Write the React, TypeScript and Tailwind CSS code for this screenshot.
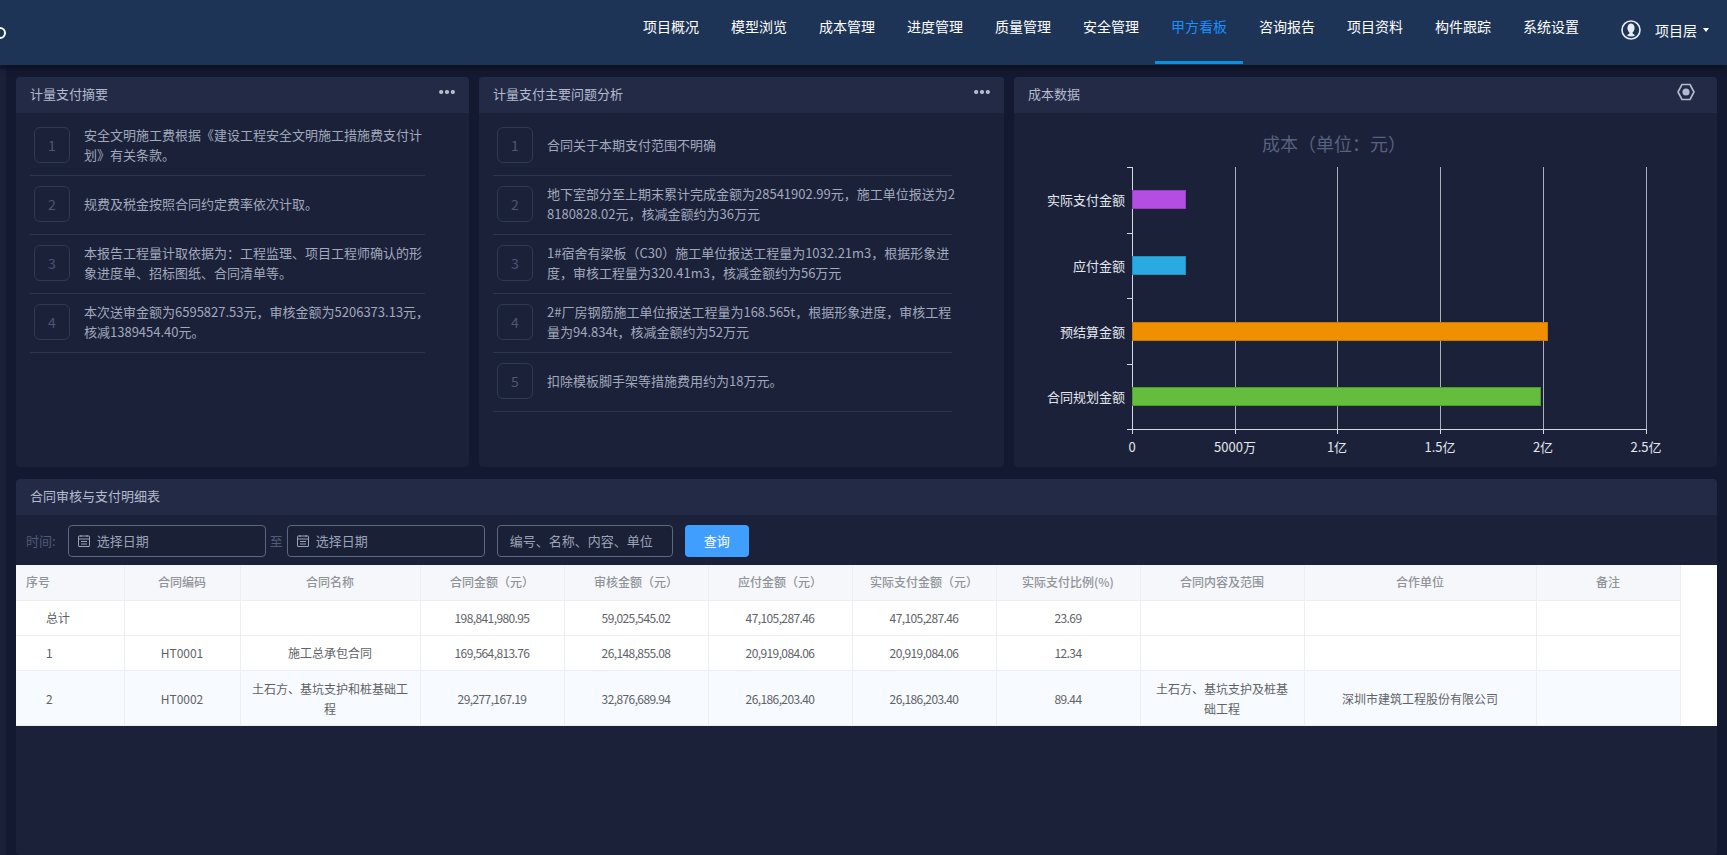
import { Ellipsis } from "lucide-react";
import type { ReactNode } from "react";

const navItems = ["项目概况", "模型浏览", "成本管理", "进度管理", "质量管理", "安全管理", "甲方看板", "咨询报告", "项目资料", "构件跟踪", "系统设置"];

const summary = [
  "安全文明施工费根据《建设工程安全文明施工措施费支付计划》有关条款。",
  "规费及税金按照合同约定费率依次计取。",
  "本报告工程量计取依据为：工程监理、项目工程师确认的形象进度单、招标图纸、合同清单等。",
  "本次送审金额为6595827.53元，审核金额为5206373.13元，核减1389454.40元。",
];

const issues = [
  "合同关于本期支付范围不明确",
  "地下室部分至上期末累计完成金额为28541902.99元，施工单位报送为28180828.02元，核减金额约为36万元",
  "1#宿舍有梁板（C30）施工单位报送工程量为1032.21m3，根据形象进度，审核工程量为320.41m3，核减金额约为56万元",
  "2#厂房钢筋施工单位报送工程量为168.565t，根据形象进度，审核工程量为94.834t，核减金额约为52万元",
  "扣除模板脚手架等措施费用约为18万元。",
];

const columns = [
  { label: "序号", width: "w-27" },
  { label: "合同编码", width: "w-29" },
  { label: "合同名称", width: "w-45" },
  { label: "合同金额（元）", width: "w-36" },
  { label: "审核金额（元）", width: "w-36" },
  { label: "应付金额（元）", width: "w-36" },
  { label: "实际支付金额（元）", width: "w-36" },
  { label: "实际支付比例(%)", width: "w-36" },
  { label: "合同内容及范围", width: "w-41" },
  { label: "合作单位", width: "w-58" },
  { label: "备注", width: "w-36" },
];

const rows = [
  ["总计", "", "", "198,841,980.95", "59,025,545.02", "47,105,287.46", "47,105,287.46", "23.69", "", "", ""],
  ["1", "HT0001", "施工总承包合同", "169,564,813.76", "26,148,855.08", "20,919,084.06", "20,919,084.06", "12.34", "", "", ""],
  ["2", "HT0002", "土石方、基坑支护和桩基础工程", "29,277,167.19", "32,876,689.94", "26,186,203.40", "26,186,203.40", "89.44", "土石方、基坑支护及桩基础工程", "深圳市建筑工程股份有限公司", ""],
];

const bars = [
  { label: "实际支付金额", y: 77, width: 53, fill: "#b44ee2", stroke: "#9a3fc4" },
  { label: "应付金额", y: 143, width: 53, fill: "#29abe2", stroke: "#2090c0" },
  { label: "预结算金额", y: 209, width: 415, fill: "#f09000", stroke: "#c97a05" },
  { label: "合同规划金额", y: 274, width: 408, fill: "#64bd3c", stroke: "#4f9a30" },
];

const xTicks = [
  { x: 118, label: "0" },
  { x: 221, label: "5000万" },
  { x: 323, label: "1亿" },
  { x: 426, label: "1.5亿" },
  { x: 529, label: "2亿" },
  { x: 632, label: "2.5亿" },
];

function Panel({ title, action, className, children }: { title: string; action?: ReactNode; className?: string; children: ReactNode }) {
  return (
    <section className={`flex flex-col overflow-hidden rounded bg-[#1b2139] ${className ?? ""}`}>
      <div className="flex h-9 shrink-0 items-center justify-between bg-[#232a46] pb-0.5 pl-3.5 pr-4 text-[13px] text-[#b4bbcd]">
        <span>{title}</span>
        {action}
      </div>
      {children}
    </section>
  );
}

function Dots() {
  return <Ellipsis size={20} strokeWidth={3} className="-mr-1 -mt-1 text-[#c4cad8]" />;
}

function IssueList({ items, rowWidth }: { items: string[]; rowWidth: string }) {
  return (
    <ul className={`ml-3.5 pt-1 text-[13px] leading-5 text-[#a1a9bc] ${rowWidth}`}>
      {items.map((text, i) => (
        <li key={i} className="border-b border-[#2c3550] pb-2.5 pl-1 pt-2">
          <div className="flex min-h-10 items-center gap-3.5">
            <span className="flex h-9 w-9 shrink-0 items-center justify-center rounded-md border border-[#2f3a57] text-sm text-[#4d5672]">
              {i + 1}
            </span>
            <p className="-mr-1.5 break-all">{text}</p>
          </div>
        </li>
      ))}
    </ul>
  );
}

function CalendarIcon() {
  return (
    <svg viewBox="0 0 14 14" className="h-3.5 w-3.5 shrink-0 text-[#9aa3b8]" fill="none" stroke="currentColor">
      <rect x="1.5" y="2" width="11" height="10.5" rx="0.5" />
      <path d="M1.5 5h11M4 1v2M10 1v2M4 7.5h6M4 10h6" />
    </svg>
  );
}

function DateInput() {
  return (
    <div className="flex h-8 w-[198px] items-center gap-1.5 rounded border border-[#5d6780] bg-[#1a2036] px-2 text-[13px] text-[#9aa3b8]">
      <CalendarIcon />
      <span>选择日期</span>
    </div>
  );
}

function CostChart() {
  return (
    <svg viewBox="0 0 703 354" className="h-full w-full" fontSize="13">
      <text x="320" y="38" textAnchor="middle" fontSize="18" fill="#56627f">成本（单位：元）</text>
      {xTicks.map(({ x, label }) => (
        <g key={label}>
          {x > 118 && <line x1={x + 0.5} x2={x + 0.5} y1="54" y2="317" stroke="#aab0bd" />}
          <line x1={x + 0.5} x2={x + 0.5} y1="316" y2="321" stroke="#d5d9e2" />
          <text x={x} y="339" textAnchor="middle" fill="#e4e7ee">{label}</text>
        </g>
      ))}
      <line x1="118.5" x2="118.5" y1="54" y2="317" stroke="#d5d9e2" />
      <line x1="118" x2="633" y1="316.5" y2="316.5" stroke="#d5d9e2" />
      {[54, 120, 185, 251, 316].map((y) => (
        <line key={y} x1="113" x2="118" y1={y + 0.5} y2={y + 0.5} stroke="#d5d9e2" />
      ))}
      {bars.map((bar) => (
        <g key={bar.label}>
          <rect x="118.5" y={bar.y + 0.5} width={bar.width} height="18" fill={bar.fill} stroke={bar.stroke} />
          <text x="111" y={bar.y + 15} textAnchor="end" fill="#e4e7ee">{bar.label}</text>
        </g>
      ))}
    </svg>
  );
}

export default function App() {
  return (
    <div className="flex h-screen flex-col overflow-hidden bg-[#131930] font-['Noto_Sans_CJK_SC','Noto_Sans',sans-serif]">
      <header className="relative z-10 flex h-[65px] shrink-0 items-start bg-[#1e3456] shadow-md shadow-black/30">
        <span className="-ml-1.5 mt-[27px] h-3 w-3 rounded-full border-2 border-white" />
        <nav className="ml-auto flex">
          {navItems.map((item) => (
            <a
              key={item}
              className={`flex h-16 w-22 items-center justify-center border-b-3 pb-2.5 text-sm ${
                item === "甲方看板" ? "border-[#0e90e0] text-[#1890ff]" : "border-transparent text-white"
              }`}
            >
              {item}
            </a>
          ))}
        </nav>
        <div className="ml-6.5 mr-4.5 flex h-16 items-center gap-3.5 pb-1 text-sm text-white">
          <svg viewBox="0 0 20 20" className="h-5 w-5">
            <circle cx="10" cy="10" r="9" fill="none" stroke="#e8ecf2" strokeWidth="1.6" />
            <ellipse cx="10" cy="8" rx="3.6" ry="4.6" fill="#e8ecf2" />
            <path d="M8.4 12h3.2v1.6l2.6 1.6a7.6 7.6 0 0 1-8.4 0l2.6-1.6z" fill="#e8ecf2" />
          </svg>
          <span className="flex items-center gap-1.5">
            项目层
            <svg viewBox="0 0 6 4" className="h-1 w-1.5 fill-white">
              <path d="M0 0h6L3 4z" />
            </svg>
          </span>
        </div>
      </header>

      <div className="flex min-h-0 flex-1">
        <aside className="mt-1 w-1.5 shrink-0 bg-[#1a2038]" />
        <main className="flex min-w-0 flex-1 flex-col gap-3 pl-2.5 pr-2.5 pt-3">
          <div className="flex h-[390px] shrink-0 gap-2.5">
            <Panel title="计量支付摘要" action={<Dots />} className="w-[453px]">
              <IssueList items={summary} rowWidth="w-[395px]" />
            </Panel>
            <Panel title="计量支付主要问题分析" action={<Dots />} className="w-[525px]">
              <IssueList items={issues} rowWidth="w-[459px]" />
            </Panel>
            <Panel
              title="成本数据"
              className="flex-1"
              action={
                <svg viewBox="0 0 18 18" className="-mt-1 mr-1.5 h-4.5 w-4.5 text-[#b4bbcd]" fill="none">
                  <path d="M5 1.5h8L17 9l-4 7.5H5L1 9z" stroke="currentColor" strokeWidth="1.6" strokeLinejoin="round" />
                  <circle cx="9" cy="9" r="3.6" fill="currentColor" />
                </svg>
              }
            >
              <div className="min-h-0 flex-1">
                <CostChart />
              </div>
            </Panel>
          </div>

          <Panel title="合同审核与支付明细表" className="min-h-0 flex-1">
            <div className="flex items-center pb-2 pl-2.5 pt-2.5 text-[13px]">
              <span className="mr-3 text-[#4f5b78]">时间:</span>
              <DateInput />
              <span className="mx-1 text-[#4f5b78]">至</span>
              <DateInput />
              <div className="ml-3 flex h-8 w-44 items-center rounded border border-[#5d6780] bg-[#1a2036] pl-3 text-[#9aa3b8]">
                编号、名称、内容、单位
              </div>
              <button className="ml-3 h-8 w-16 rounded bg-[#409eff] text-white">查询</button>
            </div>
            <div className="bg-white">
              <table className="border-collapse text-xs leading-5 text-[#606266]">
                <colgroup>
                  {columns.map((col) => (
                    <col key={col.label} className={col.width} />
                  ))}
                </colgroup>
                <thead>
                  <tr className="h-8.75 bg-[#f5f7fa] text-[#909399]">
                    {columns.map((col, i) => (
                      <th key={col.label} className={`border border-t-0 border-l-0 border-[#ebeef5] px-2.5 font-medium ${i === 0 ? "text-left" : "text-center"}`}>
                        {col.label}
                      </th>
                    ))}
                  </tr>
                </thead>
                <tbody>
                  {rows.map((row, r) => (
                    <tr key={r} className={r === 2 ? "bg-[#f7fafe]" : "h-8.75"}>
                      {row.map((cell, c) => (
                        <td
                          key={c}
                          className={`border border-l-0 border-[#ebeef5] ${r === 2 ? "pb-1.5 pt-2" : "py-1.5"} ${
                            c === 0 ? "pl-7.5 text-left" : "px-2.5 text-center"
                          } ${/^[\d,.]+$/.test(cell) ? "tracking-tighter" : ""}`}
                        >
                          {cell}
                        </td>
                      ))}
                    </tr>
                  ))}
                </tbody>
              </table>
            </div>
          </Panel>
        </main>
      </div>
    </div>
  );
}
